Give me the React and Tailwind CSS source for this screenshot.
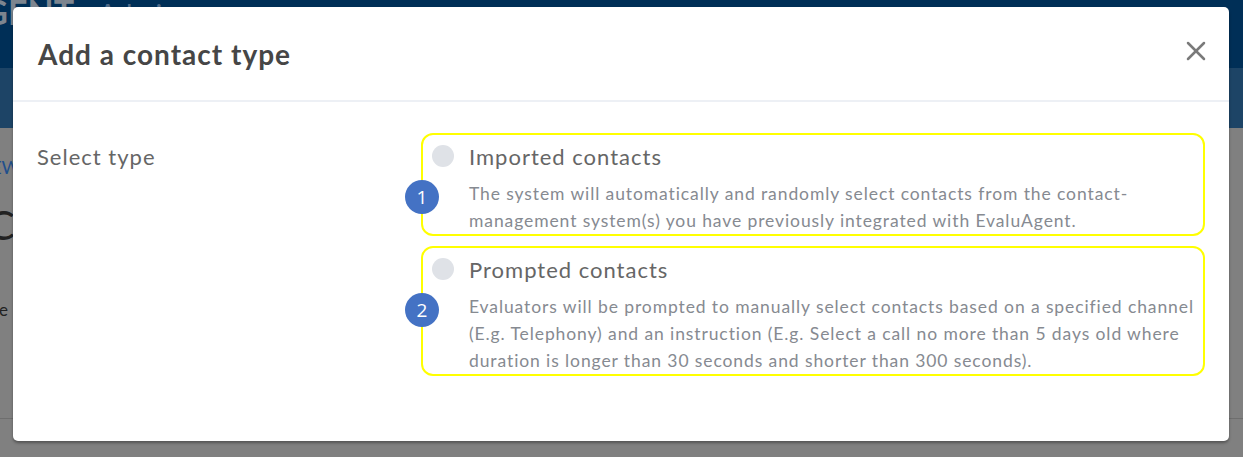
import { X } from 'lucide-react'

const options = [
  {
    id: 1,
    title: 'Imported contacts',
    text: 'The system will automatically and randomly select contacts from the contact-management system(s) you have previously integrated with EvaluAgent.',
  },
  {
    id: 2,
    title: 'Prompted contacts',
    text: 'Evaluators will be prompted to manually select contacts based on a specified channel (E.g. Telephony) and an instruction (E.g. Select a call no more than 5 days old where duration is longer than 30 seconds and shorter than 300 seconds).',
  },
]

function Option({ id, title, text }) {
  return (
    <div className="relative border-2 border-[#ffff00] rounded-[12px] pl-[9px] pr-1 pt-[6px]">
      <div className="flex items-center h-[30px]">
        <span className="w-[22px] h-[22px] rounded-full bg-[#dfe2e7] shrink-0" />
        <span className="ml-[15px] text-[22px] tracking-[1px] text-[#666]">{title}</span>
      </div>
      <p className="ml-[37px] mt-[9px] text-[17.5px] tracking-[0.9px] leading-[27px] text-[#868a91]">{text}</p>
      <span className="absolute left-[-18px] top-[45px] w-[34px] h-[34px] rounded-full bg-[#4472c4] text-white flex items-center justify-center text-[19px] font-['Open_Sans',sans-serif]">
        {id}
      </span>
    </div>
  )
}

export default function App() {
  return (
    <div className="relative w-[1243px] h-[457px] overflow-hidden bg-[#808080] font-['Lato',sans-serif]">
      {/* page behind the dimmed overlay */}
      <div className="h-[68px] bg-[#002f57] flex items-start justify-between overflow-hidden">
        <div className="ml-[-146px] mt-[-14px] text-[34px] font-bold text-[#7d858f] whitespace-nowrap">
          EVALUAGENT<span className="ml-6 font-normal text-[28px] text-[#4f6a88]">Admin</span>
        </div>
        <div className="mr-[-40px] mt-[2px] text-[20px] text-[#8a9099] whitespace-nowrap">Bot</div>
      </div>
      <div className="h-[60px] bg-[#1d4466]" />
      <div className="flex flex-col text-[#1f4f8c] whitespace-nowrap">
        <span className="ml-[-26px] mt-[26px] text-[18px]">VIEW</span>
        <span className="ml-[-44px] mt-[20px] text-[40px] text-[#222] leading-[48px]">OC</span>
        <span className="ml-[-28px] mt-[48px] text-[17px] text-[#222]">Date</span>
        <div className="mt-[95px] h-px bg-[#6e6e6e]" />
      </div>

      {/* modal */}
      <div className="absolute left-[13px] top-[7px] w-[1216px] h-[434px] bg-white rounded-[5px] shadow-[0_2px_3px_rgba(0,0,0,0.35)]">
        <div className="h-[95px] flex items-center justify-between pl-[25px] pr-[17px] border-b-2 border-[#edf0f5]">
          <h2 className="text-[28px] tracking-[1px] font-bold text-[#464646]">Add a contact type</h2>
          <X className="w-[32px] h-[32px] mt-[-6px] text-[#7a7a7a]" strokeWidth={1.9} />
        </div>
        <div className="flex pl-[24px] pr-[24px] pt-[31px]">
          <div className="w-[384px] pt-[7px] text-[22px] tracking-[1px] text-[#666]">Select type</div>
          <div className="flex-1 flex flex-col gap-[10px]">
            {options.map((o) => (
              <Option key={o.id} {...o} />
            ))}
          </div>
        </div>
      </div>
    </div>
  )
}
